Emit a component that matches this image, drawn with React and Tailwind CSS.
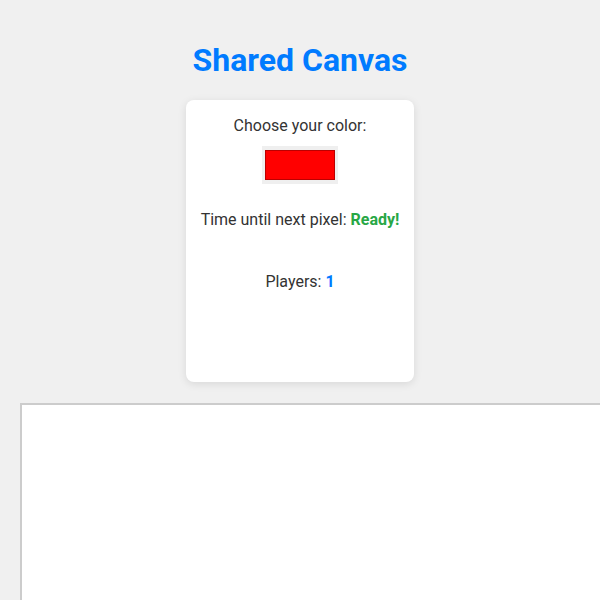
import { useState } from 'react';

const App = () => {
  const [color, setColor] = useState('#ff0000');
  const [players] = useState(1);

  return (
    <div
      className="h-screen bg-[#f0f0f0] p-5 overflow-hidden text-[#333]"
      style={{ fontFamily: 'Roboto, "Noto Sans", sans-serif' }}
    >
      <h1 className="mt-[21px] mb-[21px] text-center text-[32px] leading-[38px] font-bold text-[#007bff]">
        Shared Canvas
      </h1>

      <div className="mx-auto flex h-[282px] w-[228px] flex-col items-center rounded-lg bg-white pt-4 shadow-[0_2px_8px_rgba(0,0,0,0.1)]">
        <label className="text-base leading-[19px]">Choose your color:</label>
        <input
          type="color"
          value={color}
          onChange={(e) => setColor(e.target.value)}
          className="mt-[11px] h-[38px] w-[76px] cursor-pointer border-0 bg-[#efefef] px-[3px] py-[4px] [&::-webkit-color-swatch-wrapper]:p-0 [&::-webkit-color-swatch]:border [&::-webkit-color-swatch]:border-[#b00]"
        />
        <p className="mt-[26px] text-base leading-[19px]">
          Time until next pixel: <span className="font-bold text-[#28a745]">Ready!</span>
        </p>
        <p className="mt-[43px] text-base leading-[19px]">
          Players: <span className="font-bold text-[#007bff]">{players}</span>
        </p>
      </div>

      <div className="mt-[21px] h-[400px] w-[800px] shrink-0 border-2 border-[#ccc] bg-white" />
    </div>
  );
};

export default App;
